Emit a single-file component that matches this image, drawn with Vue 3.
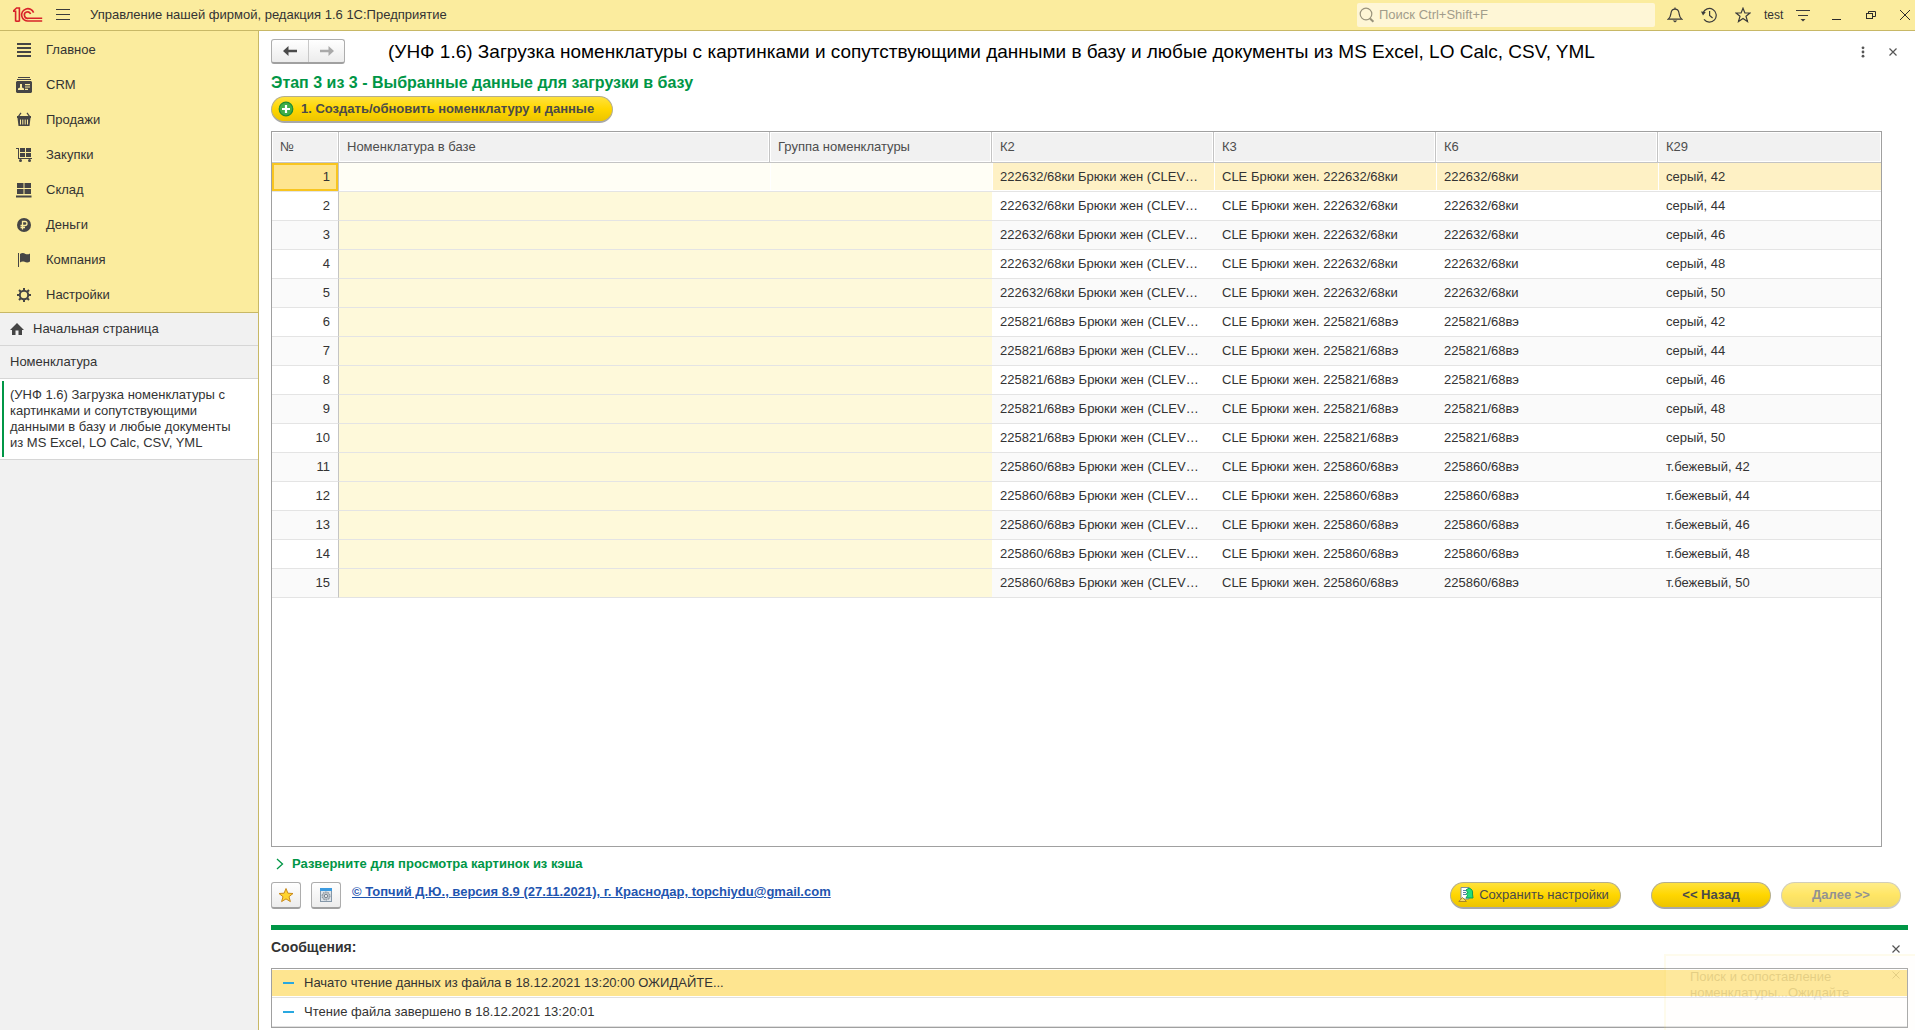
<script setup>
const sections = [
  { id: 'main', label: 'Главное' },
  { id: 'crm', label: 'CRM' },
  { id: 'sales', label: 'Продажи' },
  { id: 'purchases', label: 'Закупки' },
  { id: 'stock', label: 'Склад' },
  { id: 'money', label: 'Деньги' },
  { id: 'company', label: 'Компания' },
  { id: 'settings', label: 'Настройки' },
]

const columns = ['Номенклатура в базе', 'Группа номенклатуры', 'К2', 'К3', 'К6', 'К29']

const groups = [
  { code: '222632/68ки', color: 'серый' },
  { code: '225821/68вэ', color: 'серый' },
  { code: '225860/68вэ', color: 'т.бежевый' },
]
const rows = groups.flatMap((g) =>
  [42, 44, 46, 48, 50].map((size) => ({
    k2: `${g.code} Брюки жен (CLEVER)`,
    k3: `CLE Брюки жен. ${g.code}`,
    k6: g.code,
    k29: `${g.color}, ${size}`,
  })),
)

const messages = [
  'Начато чтение данных из файла в 18.12.2021 13:20:00 ОЖИДАЙТЕ...',
  'Чтение файла завершено в 18.12.2021 13:20:01',
]
</script>

<template>
  <div class="app">
    <header class="topbar">
      <svg class="logo" width="30" height="16" viewBox="0 0 30 16" fill="none" stroke="#d8232a" stroke-width="1.6">
        <path d="M0 4.2H2.6V14.6M0 4.2L3.6 1H6.4V14.6" />
        <path d="M2.6 14.2H6.4" />
        <path d="M20.6 5.6A6.2 6.2 0 1 0 15.6 14H29.2" />
        <path d="M17.6 7A3.2 3.2 0 1 0 15.4 11.2H29.2" />
      </svg>
      <button class="icon-btn burger" aria-label="Меню">
        <svg width="14" height="12" viewBox="0 0 14 12" stroke="#3b3b3b"><path d="M0 .5H14M0 5.5H14M0 10.5H14" /></svg>
      </button>
      <span class="app-title">Управление нашей фирмой, редакция 1.6 1С:Предприятие</span>
      <label class="search">
        <svg width="16" height="16" viewBox="0 0 16 16" fill="none" stroke="#99937c" stroke-width="1.2">
          <circle cx="7" cy="7" r="5.8" /><path d="M11 11.5L14.4 14.8" stroke-width="2" />
        </svg>
        <input type="text" placeholder="Поиск Ctrl+Shift+F" aria-label="Поиск" />
      </label>
      <div class="tools">
        <button class="icon-btn" aria-label="Уведомления">
          <svg width="16" height="16" viewBox="0 0 16 16" fill="none" stroke="#3b3b3b" stroke-width="1.2">
            <path d="M1.2 12.2C3.6 10.4 3.6 8.6 4 6C4.4 3.6 6 2.2 8 2.2S11.6 3.6 12 6C12.4 8.6 12.4 10.4 14.8 12.2Z" /><path d="M8 .4V2" /><path d="M5.6 13.6H10.4L8 15.6Z" fill="#3b3b3b" stroke="none" />
          </svg>
        </button>
        <button class="icon-btn" aria-label="История">
          <svg width="16" height="16" viewBox="0 0 16 16" fill="none" stroke="#3b3b3b" stroke-width="1.2">
            <path d="M2 6A6.8 6.8 0 1 1 3 12.4" /><path d="M8.6 4V8.4L11.6 11" /><path d="M0 4.4L4.8 5L2 8.4Z" fill="#3b3b3b" stroke="none" />
          </svg>
        </button>
        <button class="icon-btn" aria-label="Избранное">
          <svg width="16" height="16" viewBox="0 0 16 16" fill="none" stroke="#3b3b3b" stroke-width="1.2">
            <path d="M8 1.2L9.900 6H15L11 9.200L12.500 14.500L8 11.400L3.500 14.500L5 9.200L1 6H6.100Z" />
          </svg>
        </button>
        <span class="user">test</span>
        <button class="icon-btn" aria-label="Настройка">
          <svg width="16" height="16" viewBox="0 0 16 16" stroke="#3b3b3b" stroke-width="1.2">
            <path d="M1 3.500H15M3 8.500H13" /><path d="M5.500 12H10.500L8 14.600Z" fill="#3b3b3b" stroke="none" />
          </svg>
        </button>
        <button class="icon-btn" aria-label="Свернуть">
          <svg width="16" height="16" viewBox="0 0 16 16" stroke="#2b2b2b"><path d="M3 12.500H12" /></svg>
        </button>
        <button class="icon-btn" aria-label="Развернуть">
          <svg width="16" height="16" viewBox="0 0 16 16" fill="none" stroke="#2b2b2b">
            <rect x="3.500" y="6.500" width="6" height="5" /><path d="M5.500 6.500V4.500H12.500V9.500H9.500" />
          </svg>
        </button>
        <button class="icon-btn" aria-label="Закрыть">
          <svg width="16" height="16" viewBox="0 0 16 16" stroke="#2b2b2b"><path d="M3 3L13 13M13 3L3 13" /></svg>
        </button>
      </div>
    </header>

    <div class="body">
      <aside class="sidebar">
        <nav class="sections">
          <a v-for="s in sections" :key="s.id" href="#" class="section">
            <svg width="16" height="16" viewBox="0 0 16 16" fill="#454545">
              <path v-if="s.id === 'main'" d="M1 1H15V3H1ZM1 5H15V7H1ZM1 9H15V11H1ZM1 13H15V15H1Z" />
              <template v-else-if="s.id === 'crm'">
                <path d="M2 0H14V1H2ZM1 2H15V3H1Z" />
                <path fill-rule="evenodd" d="M1 4H15L16 5V15L15 16H1L0 15V5ZM2 13H8V11.500L6 10.500V7H4V10.500L2 11.500ZM9 7V8.200H14V7ZM9 9.400V10.600H14V9.400ZM9 11.800V13H12V11.800Z" />
              </template>
              <template v-else-if="s.id === 'sales'">
                <path d="M4.500 .500L5.500 1.300L3.500 4H12.500L10.500 1.300L11.500 .500L14 4H15V6H1V4H2Z" />
                <path fill-rule="evenodd" d="M1.500 6H14.500L13.500 14H2.500ZM4 7.500V12.500H5V7.500ZM6.300 7.500V12.500H7.300V7.500ZM8.700 7.500V12.500H9.700V7.500ZM11 7.500V12.500H12V7.500Z" />
              </template>
              <template v-else-if="s.id === 'purchases'">
                <path d="M0 1H3V11H16V12H2V2H0ZM4 1H9V5H4ZM10 1H15V5H10ZM4 6H9V10H4ZM10 6H15V10H10Z" />
                <circle cx="4.500" cy="13.500" r="1.500" /><circle cx="13.500" cy="13.500" r="1.500" />
              </template>
              <path v-else-if="s.id === 'stock'" d="M1 1H7.500V6H1ZM8.500 1H15V6H8.500ZM1 7H7.500V12H1ZM8.500 7H15V12H8.500ZM0 13.500H15.500V15.500H0Z" />
              <template v-else-if="s.id === 'money'">
                <circle cx="8" cy="8" r="7" />
                <path d="M6.500 12.500V4.500H9A2 2 0 0 1 9 8.500H4.500M4.500 10.500H9" fill="none" stroke="#fbec9e" stroke-width="1.300" />
              </template>
              <path v-else-if="s.id === 'company'" d="M2 1H3V15H2ZM4 2C6 .500 8 1 9.500 2C11 2.600 12.500 2.400 14 1.500V9.500C12 11 10 10.500 8.500 9.800C7 9.200 5.500 9.200 4 10.500Z" />
              <template v-else>
                <circle cx="8" cy="8" r="4.200" fill="none" stroke="#454545" stroke-width="2" />
                <path d="M8 1V4M8 12V15M1 8H4M12 8H15M3 3L5 5M11 11L13 13M3 13L5 11M11 5L13 3" stroke="#454545" stroke-width="2" />
              </template>
            </svg>
            <span>{{ s.label }}</span>
          </a>
        </nav>
        <nav class="windows">
          <a href="#" class="window home">
            <svg width="14" height="12" viewBox="0 0 14 12" fill="#454545"><path d="M7 0L14 7H12V12H8.500V7.500H5.500V12H2V7H0Z" /></svg>
            Начальная страница
          </a>
          <a href="#" class="window">Номенклатура</a>
          <a href="#" class="window current">(УНФ 1.6) Загрузка номенклатуры с картинками и сопутствующими данными в базу и любые документы из MS Excel, LO Calc, CSV, YML</a>
        </nav>
      </aside>

      <main class="main">
        <div class="title-row">
          <div class="history">
            <button aria-label="Назад">
              <svg width="14" height="12" viewBox="0 0 14 12" fill="#4a4a4a"><path d="M0 6L5.500 1V4.800H14V7.200H5.500V11Z" /></svg>
            </button>
            <button aria-label="Вперёд" disabled>
              <svg width="14" height="12" viewBox="0 0 14 12" fill="#a9a9a9"><path d="M14 6L8.500 1V4.800H0V7.200H8.500V11Z" /></svg>
            </button>
          </div>
          <h1>(УНФ 1.6) Загрузка номенклатуры с картинками и сопутствующими данными в базу и любые документы из MS Excel, LO Calc, CSV, YML</h1>
          <button class="icon-btn" aria-label="Ещё">
            <svg width="12" height="12" viewBox="0 0 12 12" fill="#555"><circle cx="6" cy="1.800" r="1.400" /><circle cx="6" cy="6" r="1.400" /><circle cx="6" cy="10.200" r="1.400" /></svg>
          </button>
          <button class="icon-btn" aria-label="Закрыть окно">
            <svg width="12" height="12" viewBox="0 0 12 12" stroke="#555" stroke-width="1.200"><path d="M2.500 2.500L9.500 9.500M9.500 2.500L2.500 9.500" /></svg>
          </button>
        </div>

        <h2>Этап 3 из 3 - Выбранные данные для загрузки в базу</h2>

        <button class="pill create">
          <svg width="16" height="16" viewBox="0 0 16 16"><circle cx="8" cy="8" r="6.800" fill="#3fae49" stroke="#1d8a35" stroke-width="1.200" /><path d="M8 4V12M4 8H12" stroke="#fff" stroke-width="2.200" /></svg>
          1. Создать/обновить номенклатуру и данные
        </button>

        <div class="grid-frame">
          <table class="grid">
            <colgroup><col class="c-num" /><col class="c-name" /><col class="c-std" span="4" /><col /></colgroup>
            <thead>
              <tr><th>№</th><th v-for="c in columns" :key="c">{{ c }}</th></tr>
            </thead>
            <tbody>
              <tr v-for="(r, i) in rows" :key="i" :class="{ selected: i === 0 }">
                <td class="num">{{ i + 1 }}</td>
                <td class="target"></td>
                <td class="target"></td>
                <td>{{ r.k2 }}</td>
                <td>{{ r.k3 }}</td>
                <td>{{ r.k6 }}</td>
                <td>{{ r.k29 }}</td>
              </tr>
            </tbody>
          </table>
        </div>

        <button class="expander">
          <svg width="8" height="12" viewBox="0 0 8 12" fill="none" stroke="#009646" stroke-width="1.300"><path d="M1 1L6.500 6L1 11" /></svg>
          Разверните для просмотра картинок из кэша
        </button>

        <div class="footer">
          <button class="square" aria-label="Избранное">
            <svg width="16" height="16" viewBox="0 0 16 16"><path d="M8 1.500L9.900 6.200L15 6.500L11 9.700L12.400 14.600L8 11.900L3.600 14.600L5 9.700L1 6.500L6.100 6.200Z" fill="#ffd42e" stroke="#c98a1c" /></svg>
          </button>
          <button class="square" aria-label="Параметры">
            <svg width="16" height="16" viewBox="0 0 16 16"><rect x="2.500" y="2.500" width="11" height="12" fill="#dfe5ea" stroke="#8497a8" /><path d="M2 1H14V4H2Z" fill="#3d9be0" /><circle cx="8" cy="9" r="4" fill="#b9c1c8" stroke="#78838d" stroke-dasharray="1.500 1" /><circle cx="8" cy="9" r="1.600" fill="#f4f6f8" stroke="#78838d" /></svg>
          </button>
          <a class="author" href="#">© Топчий Д.Ю., версия 8.9 (27.11.2021), г. Краснодар, topchiydu@gmail.com</a>
          <button class="pill save">
            <svg width="16" height="16" viewBox="0 0 16 16"><path d="M3 .500H11V12H3Z" fill="#fff" stroke="#7d8fa0" /><path d="M5 3.500H8M5 5.500H8M5 7.500H8" stroke="#5c7fa8" /><path d="M8 3L11 1C14 2 15 4 14.500 7L15 11H8L9.500 8.500C7.500 7.500 8 6 10 6Z" fill="#22dc7c" stroke="#0c9c56" /><path d="M0.800 14.500L4.500 10.500L8.500 14.500Z" fill="#f4d86c" stroke="#a8862a" /></svg>
            Сохранить настройки
          </button>
          <button class="pill step back">&lt;&lt; Назад</button>
          <button class="pill step" disabled>Далее &gt;&gt;</button>
        </div>

        <section class="messages">
          <div class="messages-head">
            <h3>Сообщения:</h3>
            <button class="icon-btn" aria-label="Закрыть сообщения">
              <svg width="12" height="12" viewBox="0 0 12 12" stroke="#555" stroke-width="1.200"><path d="M2.500 2.500L9.500 9.500M9.500 2.500L2.500 9.500" /></svg>
            </button>
          </div>
          <ul>
            <li v-for="(m, i) in messages" :key="m" :class="{ active: i === 0 }">{{ m }}</li>
          </ul>
        </section>
      </main>
    </div>

    <div class="toast">
      <p>Поиск и сопоставление номенклатуры...Ожидайте</p>
      <svg width="12" height="12" viewBox="0 0 12 12" stroke="#333"><path d="M2.500 2.500L9.500 9.500M9.500 2.500L2.500 9.500" /></svg>
    </div>
  </div>
</template>

<style>
body {
  margin: 0;
  background: #fff;
}
</style>

<style scoped>
.app {
  position: relative;
  display: flex;
  flex-direction: column;
  min-height: 100vh;
  overflow: hidden;
  font: 13px/16px "Liberation Sans", Arial, sans-serif;
  color: #333;
}
* {
  box-sizing: border-box;
}
button {
  font: inherit;
  color: inherit;
  padding: 0;
}
a {
  color: inherit;
  text-decoration: none;
}
svg {
  display: block;
  flex: none;
}
.icon-btn {
  display: flex;
  border: 0;
  background: none;
}

.topbar {
  display: flex;
  align-items: center;
  height: 31px;
  padding: 0 2px 0 13px;
  background: #fbec9e;
  border-bottom: 1px solid #c8b866;
}
.burger {
  margin: 0 20px 0 13px;
}
.app-title {
  flex: 1;
  white-space: nowrap;
}
.search {
  display: flex;
  align-items: center;
  gap: 4px;
  width: 298px;
  height: 24px;
  padding-left: 2px;
  border-radius: 2px;
  background: #fef6d6;
}
.search input {
  flex: 1;
  min-width: 0;
  border: 0;
  padding: 0;
  background: none;
  font: inherit;
  outline: none;
}
.search input::placeholder {
  color: #a29d8b;
  opacity: 1;
}
.tools {
  display: flex;
  align-items: center;
  gap: 18px;
  margin-left: 12px;
}
.user {
  width: 20px;
  margin: 0 -7px 0 -5px;
  font-size: 12px;
}

.body {
  flex: 1;
  display: flex;
}
.sidebar {
  flex: none;
  width: 259px;
  background: #f1f1f1;
  border-right: 1px solid #c8b866;
}
.sections {
  padding-top: 1px;
  background: #fbec9e;
  border-bottom: 1px solid #c8b866;
}
.section {
  display: flex;
  align-items: center;
  gap: 14px;
  height: 35px;
  padding-left: 16px;
}
.window {
  display: flex;
  align-items: center;
  gap: 9px;
  min-height: 33px;
  padding: 0 10px;
  border-bottom: 1px solid #d6d6d6;
}
.window.current {
  position: relative;
  padding: 8px 24px 8px 10px;
  background: #fff;
}
.window.current::before {
  content: "";
  position: absolute;
  left: 2px;
  top: 2px;
  bottom: 2px;
  width: 2px;
  background: #009646;
}

.main {
  flex: 1;
  min-width: 0;
  display: flex;
  flex-direction: column;
  padding: 8px 7px 2px 12px;
}
.title-row {
  display: flex;
  align-items: center;
  gap: 18px;
  height: 25px;
  padding-right: 9px;
}
.history {
  display: flex;
  margin-right: 25px;
  border: 1px solid #adadad;
  border-bottom: 2px solid #a0a0a0;
  border-radius: 3px;
  background: linear-gradient(#fff, #ececec);
}
.history button {
  display: flex;
  align-items: center;
  justify-content: center;
  width: 36px;
  height: 22px;
  border: 0;
  background: none;
}
.history button + button {
  border-left: 1px solid #c8c8c8;
}
h1 {
  flex: 1;
  margin: 0;
  font-size: 19px;
  line-height: 24px;
  font-weight: 400;
  color: #000;
  white-space: nowrap;
}
h2 {
  margin: 10px 0 4px;
  font-size: 16px;
  line-height: 18px;
  color: #009646;
}
.pill {
  display: flex;
  align-items: center;
  justify-content: center;
  height: 27px;
  border: 1px solid #b5ae8c;
  border-bottom: 2px solid #a8a8a8;
  border-radius: 14px;
  background: linear-gradient(#ffe23c, #ffd600 50%, #ecc400);
  color: #4a4a4a;
  white-space: nowrap;
}
.create {
  align-self: flex-start;
  gap: 7px;
  padding: 0 18px 0 6px;
  font-weight: 700;
}

.grid-frame {
  flex: 1;
  margin: 8px 26px 0 0;
  border: 1px solid #a0a0a0;
  overflow: hidden;
}
.grid {
  width: 100%;
  table-layout: fixed;
  border-collapse: separate;
  border-spacing: 0;
}
.c-num {
  width: 67px;
}
.c-name {
  width: 431px;
}
.c-std {
  width: 222px;
}
.grid th {
  height: 31px;
  padding: 0 8px;
  border-right: 1px solid #c4c4c4;
  border-bottom: 1px solid #c4c4c4;
  background: #f1f1f1;
  box-shadow: inset 0 0 0 1px #fff;
  font-weight: 400;
  text-align: left;
  color: #4d4d4d;
}
.grid th:last-child {
  border-right: 0;
}
.grid td {
  height: 29px;
  padding: 0 8px;
  border-bottom: 1px solid #e4e4e4;
  overflow: hidden;
  text-overflow: ellipsis;
  white-space: nowrap;
}
.grid tbody tr:nth-child(odd) {
  background: #fafafa;
}
.grid .num {
  border-right: 1px solid #c4c4c4;
  text-align: right;
}
.grid .target {
  background: #fef9da;
}
.grid .selected td {
  background: #fef1c5;
  box-shadow: inset 0 -1px #fff, inset 1px 0 #fff;
}
.grid .selected .target {
  background: #fffef5;
}
.grid .selected .num {
  background: #fee590;
  box-shadow: inset 0 0 0 2px #f8c520;
}

.expander {
  display: flex;
  align-items: center;
  align-self: flex-start;
  gap: 8px;
  height: 18px;
  margin: 8px 0 9px 5px;
  border: 0;
  background: none;
  font-weight: 700;
  color: #009646;
}
.footer {
  display: flex;
  padding: 0 7px 16px 0;
}
.square {
  display: flex;
  align-items: center;
  justify-content: center;
  width: 30px;
  height: 27px;
  margin-right: 10px;
  border: 1px solid #adadad;
  border-bottom: 2px solid #a0a0a0;
  border-radius: 3px;
  background: linear-gradient(#fff, #ececec);
}
.author {
  margin: 2px auto 0 1px;
  font-weight: 700;
  color: #1f55b0;
  text-decoration: underline;
}
.save {
  width: 171px;
  gap: 5px;
  padding-right: 4px;
}
.step {
  width: 120px;
  margin-left: 10px;
  font-weight: 700;
}
.back {
  margin-left: 30px;
}
.pill:disabled {
  opacity: 0.6;
}

.messages {
  border-top: 5px solid #009646;
}
.messages-head {
  display: flex;
  align-items: center;
  justify-content: space-between;
  height: 38px;
  padding-right: 6px;
}
h3 {
  margin: 0 0 4px;
  font-size: 14px;
}
.messages ul {
  margin: 0;
  padding: 0;
  border: 1px solid #a0a0a0;
  list-style: none;
}
.messages li {
  display: flex;
  align-items: center;
  gap: 10px;
  height: 29px;
  padding-left: 11px;
  border-bottom: 1px solid #e0e0e0;
}
.messages li::before {
  content: "";
  width: 11px;
  height: 2px;
  background: #29a8e0;
}
.messages .active {
  background: #fee590;
  box-shadow: inset 0 1px #fff, inset 0 -1px #fff;
}

.toast {
  position: absolute;
  right: 0;
  bottom: 0;
  display: flex;
  justify-content: space-between;
  width: 251px;
  height: 76px;
  padding: 13px 13px 0 24px;
  border: 2px solid #fbe36a;
  border-width: 2px 0 0 2px;
  background: #fffdf0;
  opacity: 0.12;
  pointer-events: none;
}
.toast p {
  width: 170px;
  margin: 0;
}
</style>
